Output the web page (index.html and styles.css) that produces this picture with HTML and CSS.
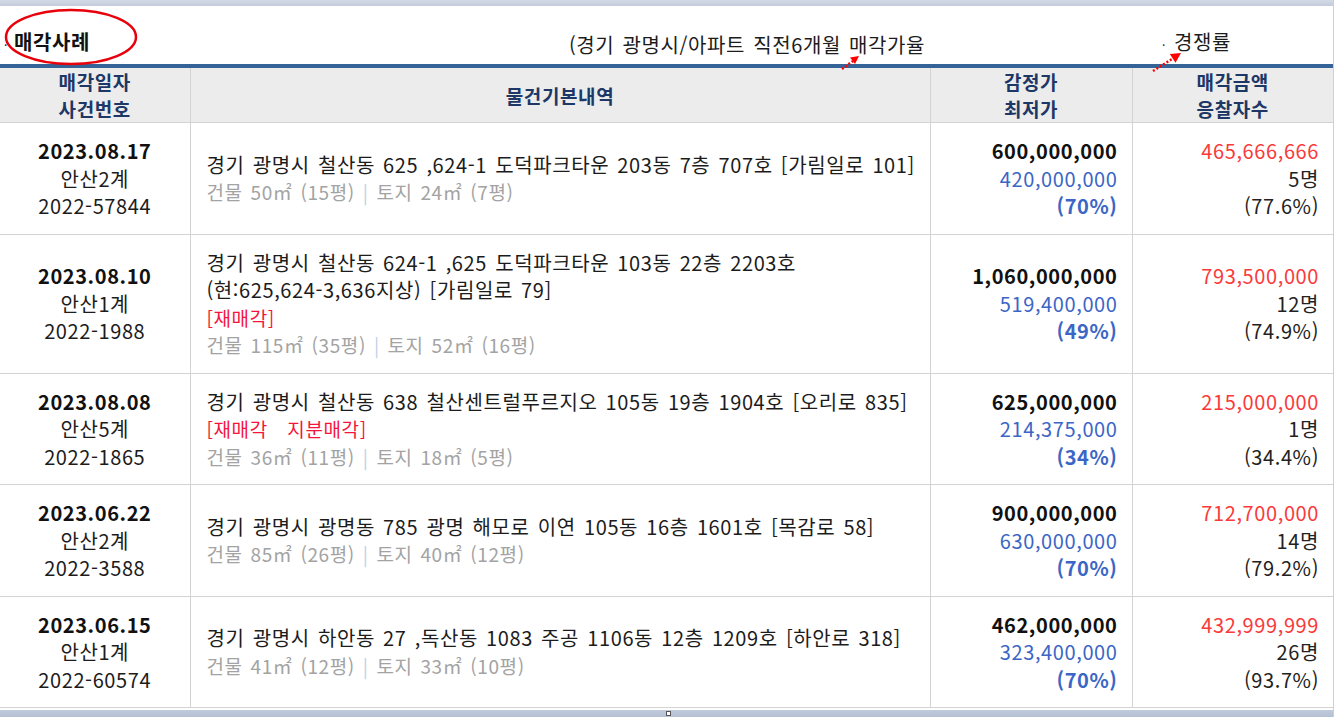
FILE: index.html
```html
<!DOCTYPE html>
<html lang="ko">
<head>
    <meta charset="UTF-8">
    <meta name="viewport" content="width=device-width, initial-scale=1.0">
    <title>매각사례</title>
    <link rel="stylesheet" href="styles.css">
</head>
<body>
    <div class="page">
        <div class="top-bar"></div>

        <!-- Section title -->
        <div class="title-row">
            <div class="title"><span class="dot">·</span>매각사례</div>
            <div class="subtitle">(경기 광명시/아파트 직전6개월 매각가율</div>
            <div class="rate"><span class="dot">·</span>경쟁률</div>
        </div>

        <table class="cases">
            <colgroup>
                <col class="c-date">
                <col class="c-info">
                <col class="c-price">
                <col class="c-sale">
            </colgroup>
            <thead>
                <tr>
                    <th>매각일자<br>사건번호</th>
                    <th>물건기본내역</th>
                    <th>감정가<br>최저가</th>
                    <th>매각금액<br>응찰자수</th>
                </tr>
            </thead>
            <tbody>
                <tr>
                    <td class="date"><b>2023.08.17</b><br>안산2계<br>2022-57844</td>
                    <td class="info">
                        <div class="addr">경기 광명시 철산동 625 ,624-1 도덕파크타운 203동 7층 707호 [가림일로 101]</div>
                        <div class="area">건물 50㎡ (15평) <span class="sep">|</span> 토지 24㎡ (7평)</div>
                    </td>
                    <td class="price"><b>600,000,000</b><br><span class="low">420,000,000</span><br><span class="pct">(70%)</span></td>
                    <td class="sale"><span class="won">465,666,666</span><br>5명<br>(77.6%)</td>
                </tr>
                <tr>
                    <td class="date"><b>2023.08.10</b><br>안산1계<br>2022-1988</td>
                    <td class="info">
                        <div class="addr">경기 광명시 철산동 624-1 ,625 도덕파크타운 103동 22층 2203호<br>(현:625,624-3,636지상) [가림일로 79]</div>
                        <div class="tag">[재매각]</div>
                        <div class="area">건물 115㎡ (35평) <span class="sep">|</span> 토지 52㎡ (16평)</div>
                    </td>
                    <td class="price"><b>1,060,000,000</b><br><span class="low">519,400,000</span><br><span class="pct">(49%)</span></td>
                    <td class="sale"><span class="won">793,500,000</span><br>12명<br>(74.9%)</td>
                </tr>
                <tr>
                    <td class="date"><b>2023.08.08</b><br>안산5계<br>2022-1865</td>
                    <td class="info">
                        <div class="addr">경기 광명시 철산동 638 철산센트럴푸르지오 105동 19층 1904호 [오리로 835]</div>
                        <div class="tag">[재매각　지분매각]</div>
                        <div class="area">건물 36㎡ (11평) <span class="sep">|</span> 토지 18㎡ (5평)</div>
                    </td>
                    <td class="price"><b>625,000,000</b><br><span class="low">214,375,000</span><br><span class="pct">(34%)</span></td>
                    <td class="sale"><span class="won">215,000,000</span><br>1명<br>(34.4%)</td>
                </tr>
                <tr>
                    <td class="date"><b>2023.06.22</b><br>안산2계<br>2022-3588</td>
                    <td class="info">
                        <div class="addr">경기 광명시 광명동 785 광명 해모로 이연 105동 16층 1601호 [목감로 58]</div>
                        <div class="area">건물 85㎡ (26평) <span class="sep">|</span> 토지 40㎡ (12평)</div>
                    </td>
                    <td class="price"><b>900,000,000</b><br><span class="low">630,000,000</span><br><span class="pct">(70%)</span></td>
                    <td class="sale"><span class="won">712,700,000</span><br>14명<br>(79.2%)</td>
                </tr>
                <tr>
                    <td class="date"><b>2023.06.15</b><br>안산1계<br>2022-60574</td>
                    <td class="info">
                        <div class="addr">경기 광명시 하안동 27 ,독산동 1083 주공 1106동 12층 1209호 [하안로 318]</div>
                        <div class="area">건물 41㎡ (12평) <span class="sep">|</span> 토지 33㎡ (10평)</div>
                    </td>
                    <td class="price"><b>462,000,000</b><br><span class="low">323,400,000</span><br><span class="pct">(70%)</span></td>
                    <td class="sale"><span class="won">432,999,999</span><br>26명<br>(93.7%)</td>
                </tr>
            </tbody>
        </table>

        <div class="scroll-bar"><span class="grip"></span></div>

        <!-- Red annotation marks drawn over the page -->
        <svg class="marks" width="1336" height="717" viewBox="0 0 1336 717">
            <ellipse cx="71" cy="37" rx="65" ry="27" fill="none" stroke="#e8000b" stroke-width="2.5"/>
            <line x1="842" y1="69" x2="853" y2="61" stroke="#f00" stroke-width="2.5" stroke-dasharray="2 2"/>
            <polygon points="859,56 855,64 850,57.5" fill="#f00"/>
            <line x1="1153" y1="71" x2="1172" y2="59" stroke="#f00" stroke-width="2.5" stroke-dasharray="2 2"/>
            <polygon points="1181,53 1175.5,62.8 1169.8,54" fill="#f00"/>
        </svg>
    </div>
</body>
</html>
```

FILE: styles.css
```css
body {
    margin: 0;
    background: #fff;
    font-family: "Noto Sans CJK KR", "Noto Sans", sans-serif;
    color: #1c1c1c;
}

.page {
    position: relative;
    width: 1333px;
    border-right: 1px solid #cfcfcf;
}

.top-bar {
    height: 6px;
    background: linear-gradient(#d3dae6, #c3ccdc);
}

/* Section title row */
.title-row {
    display: grid;
    grid-template-columns: 569px 593px 1fr;
    align-items: end;
    height: 62px;
    box-sizing: border-box;
    padding-bottom: 6px;
    border-bottom: 4px solid #346397;
    font-size: 20px;
    line-height: 27px;
    letter-spacing: 0.6px;
    word-spacing: 2px;
}

.title {
    padding-left: 4px;
    font-weight: bold;
    color: #111;
}

.title .dot {
    font-weight: normal;
    margin-right: 6px;
    font-size: 12px;
}

.rate .dot {
    margin-right: 8px;
    font-size: 12px;
}

/* Table */
.cases {
    width: 1333px;
    table-layout: fixed;
    border-collapse: collapse;
    font-size: 20px;
    line-height: 27.5px;
    letter-spacing: 0.6px;
    word-spacing: 2px;
}

.c-date { width: 190px; }
.c-info { width: 740px; }
.c-price { width: 202px; }
.c-sale { width: 201px; }

.cases th {
    background: #ececec;
    color: #1d3766;
    font-size: 19px;
    line-height: 27px;
    font-weight: bold;
    padding: 0;
    height: 54px;
    border: 1px solid #d3d3d3;
    border-top: none;
}

.cases td {
    border: 1px solid #d3d3d3;
    padding: 14px;
    vertical-align: middle;
}

.cases th:first-child,
.cases td:first-child {
    border-left: none;
}

.cases th:last-child,
.cases td:last-child {
    border-right: none;
}

.date {
    text-align: center;
}

.date b {
    color: #111;
}

.info {
    padding-left: 16px !important;
}

.tag {
    color: #f5143c;
    font-size: 19px;
}

.area {
    color: #a3a3a3;
    font-size: 19px;
}

.sep {
    color: #bcd0e6;
}

.price,
.sale {
    text-align: right;
}

.price b {
    color: #111;
    font-weight: 600;
}

.low {
    color: #3b66c6;
}

.pct {
    color: #3b66c6;
    font-weight: 600;
}

.won {
    color: #fa3a3a;
}

.sale {
    color: #222;
}

/* Horizontal scroll strip */
.scroll-bar {
    position: relative;
    height: 10px;
    margin-top: 2px;
    background: linear-gradient(#c0cadb, #aebbd1);
}

.grip {
    position: absolute;
    left: 666px;
    top: 1px;
    width: 3px;
    height: 3px;
    border: 1px solid #555;
    background: #fff;
}

.marks {
    position: absolute;
    top: 0;
    left: 0;
    pointer-events: none;
}
```
